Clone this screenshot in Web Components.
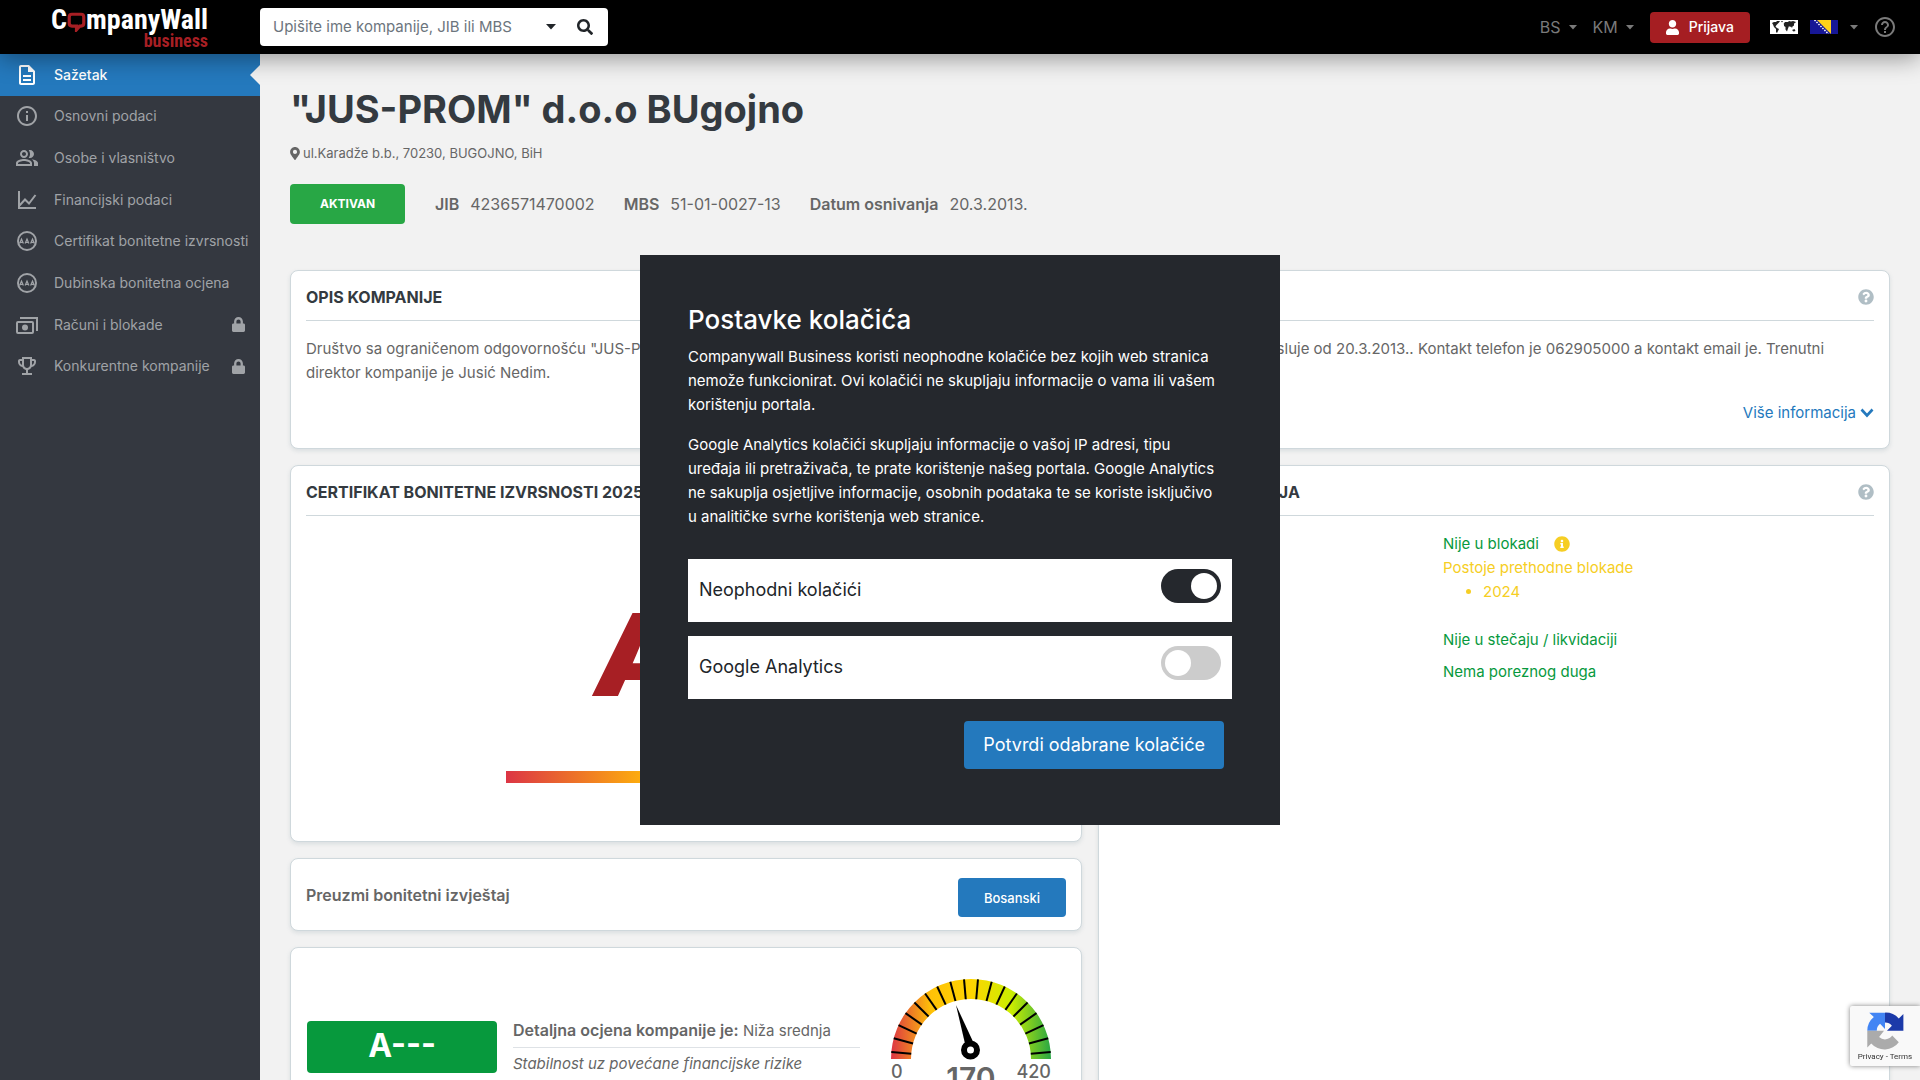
<!DOCTYPE html>
<html lang="bs">
<head>
<meta charset="utf-8">
<meta name="viewport" content="width=device-width, initial-scale=1">
<title>"JUS-PROM" d.o.o BUgojno - CompanyWall Business</title>
<style>
    :root {
        --blue: #2479bd;
        --red: #a71f24;
        --green: #07993d;
        --yellow: #f6ce24;
        --dark: #343840;
        --modal: #25282d;
        --text: #666;
        --line: #cfd8dc;
    }

    body {
        margin: 0;
        height: 100vh;
        overflow: hidden;
        background: #f2f2f2;
        color: var(--text);
        font: 16px/24px Inter, "Liberation Sans", sans-serif;
    }
</style>
</head>
<body>
<cw-app></cw-app>

<script>
// shared base: every component renders its template into an open shadow root
class CwElement extends HTMLElement {
    constructor() {
        super();
        this.attachShadow({ mode: 'open' });
    }

    connectedCallback() {
        this.shadowRoot.innerHTML = `
            <style>
                *, *::before, *::after { box-sizing: border-box; }
                button, input { font: inherit; }
                button { cursor: pointer; }
                a { color: inherit; text-decoration: none; }
                h1, h2, p, ul, dl, dd { margin: 0; padding: 0; }
            </style>
            ${this.template()}
        `;
    }
}

// icon set: [viewBox, markup]
const ICONS = {
    doc: ['0 0 24 24', '<path d="M8 16h8v2H8zm0-4h8v2H8zm6-10H6c-1.1 0-2 .9-2 2v16c0 1.1.89 2 1.99 2H18c1.1 0 2-.9 2-2V8l-6-6zm4 18H6V4h7v5h5v11z"/>'],
    info: ['0 0 24 24', '<path d="M11 7h2v2h-2zm0 4h2v6h-2zm1-9C6.48 2 2 6.48 2 12s4.48 10 10 10 10-4.48 10-10S17.52 2 12 2zm0 18c-4.41 0-8-3.59-8-8s3.59-8 8-8 8 3.59 8 8-3.59 8-8 8z"/>'],
    people: ['0 0 24 24', '<path d="M16.67 13.13C18.04 14.06 19 15.32 19 17v3h4v-3c0-2.18-3.57-3.47-6.33-3.87zM15 12c2.21 0 4-1.79 4-4s-1.79-4-4-4c-.47 0-.91.1-1.33.24C14.5 5.27 15 6.58 15 8s-.5 2.73-1.33 3.76c.42.14.86.24 1.33.24zM9 12c2.21 0 4-1.79 4-4s-1.79-4-4-4-4 1.79-4 4 1.79 4 4 4zm0-6c1.1 0 2 .9 2 2s-.9 2-2 2-2-.9-2-2 .9-2 2-2zm0 7c-2.67 0-8 1.34-8 4v3h16v-3c0-2.66-5.33-4-8-4zm6 5H3v-.99C3.2 16.29 6.3 15 9 15s5.8 1.29 6 2v1z"/>'],
    chart: ['0 0 24 24', '<path d="M4 3v17h17M4.500 17.500l5.500-6 4 4 6.500-8.500" fill="none" stroke="currentColor" stroke-width="2"/>'],
    aaa: ['0 0 24 24', '<circle cx="12" cy="12" r="9" fill="none" stroke="currentColor" stroke-width="2"/><path d="M4.600 14.500l1.900-4.500 1.900 4.500M5.300 13.300h2.400M10.100 14.500l1.900-4.500 1.900 4.500M10.800 13.300h2.400M15.600 14.500l1.900-4.500 1.900 4.500M16.300 13.300h2.400" fill="none" stroke="currentColor" stroke-width="1.200"/>'],
    money: ['0 0 24 24', '<path d="M5 5h17v13" fill="none" stroke="currentColor" stroke-width="2"/><rect x="2" y="9" width="16" height="11" rx="1" fill="none" stroke="currentColor" stroke-width="2"/><circle cx="10" cy="14.500" r="3"/>'],
    trophy: ['0 0 24 24', '<path d="M19 5h-2V3H7v2H5c-1.1 0-2 .9-2 2v1c0 2.55 1.92 4.63 4.39 4.94.63 1.5 1.98 2.63 3.61 2.96V19H7v2h10v-2h-4v-3.100c1.630-.330 2.980-1.460 3.610-2.960C19.080 12.630 21 10.550 21 8V7c0-1.100-.900-2-2-2zM5 8V7h2v3.820C5.840 10.400 5 9.300 5 8zm7 6c-1.650 0-3-1.350-3-3V5h6v6c0 1.650-1.350 3-3 3zm7-6c0 1.300-.840 2.400-2 2.820V7h2v1z"/>'],
    lock: ['0 0 448 512', '<path d="M400 224h-24v-72C376 68.200 307.800 0 224 0S72 68.200 72 152v72H48c-26.500 0-48 21.500-48 48v192c0 26.500 21.500 48 48 48h352c26.500 0 48-21.500 48-48V272c0-26.500-21.500-48-48-48zm-104 0H152v-72c0-39.700 32.300-72 72-72s72 32.300 72 72v72z"/>'],
    pin: ['0 0 384 512', '<path d="M172.268 501.670C26.970 291.031 0 269.413 0 192 0 85.961 85.961 0 192 0s192 85.961 192 192c0 77.413-26.970 99.031-172.268 309.670-9.535 13.774-29.930 13.773-39.464 0zM192 272c44.183 0 80-35.817 80-80s-35.817-80-80-80-80 35.817-80 80 35.817 80 80 80z"/>'],
    search: ['0 0 512 512', '<path d="M505 442.700L405.300 343c-4.500-4.500-10.600-7-17-7H372c27.600-35.300 44-79.700 44-128C416 93.100 322.900 0 208 0S0 93.100 0 208s93.100 208 208 208c48.300 0 92.700-16.400 128-44v16.300c0 6.400 2.500 12.500 7 17l99.700 99.700c9.400 9.400 24.600 9.400 33.900 0l28.300-28.300c9.400-9.400 9.400-24.600.1-34zM208 336c-70.700 0-128-57.200-128-128 0-70.700 57.200-128 128-128 70.700 0 128 57.200 128 128 0 70.700-57.200 128-128 128z"/>'],
    caret: ['0 0 10 6', '<path d="M0 0h10L5 5.500z"/>'],
    user: ['0 0 448 512', '<path d="M224 256c70.700 0 128-57.300 128-128S294.700 0 224 0 96 57.300 96 128s57.300 128 128 128zm89.600 32h-16.700c-22.200 10.200-46.900 16-72.900 16s-50.600-5.800-72.900-16h-16.700C60.200 288 0 348.200 0 422.400V464c0 26.500 21.500 48 48 48h352c26.500 0 48-21.500 48-48v-41.600c0-74.200-60.200-134.400-134.400-134.400z"/>'],
    help: ['0 0 24 24', '<path d="M11 18h2v-2h-2v2zm1-16C6.480 2 2 6.480 2 12s4.480 10 10 10 10-4.480 10-10S17.520 2 12 2zm0 18c-4.410 0-8-3.590-8-8s3.590-8 8-8 8 3.590 8 8-3.590 8-8 8zm0-14c-2.210 0-4 1.790-4 4h2c0-1.100.900-2 2-2s2 .900 2 2c0 2-3 1.750-3 5h2c0-2.250 3-2.500 3-5 0-2.210-1.790-4-4-4z"/>'],
    question: ['0 0 512 512', '<path d="M504 256c0 137-111 248-248 248S8 393 8 256C8 119 119 8 256 8s248 111 248 248zM262.700 90c-54.500 0-89.300 23-116.500 63.800-3.500 5.300-2.400 12.400 2.700 16.300l34.700 26.300c5.200 3.900 12.600 3 16.700-2.100 17.900-22.700 30.100-35.800 57.300-35.800 20.400 0 45.700 13.100 45.700 33 0 15-12.400 22.700-32.500 34C247.100 238.500 216 254.900 216 296v4c0 6.600 5.400 12 12 12h56c6.600 0 12-5.400 12-12v-1.300c0-28.500 83.200-29.600 83.200-106.700 0-58-60.200-102-116.500-102zM256 338c-25.400 0-46 20.600-46 46s20.600 46 46 46 46-20.600 46-46-20.600-46-46-46z"/>'],
    infoSolid: ['0 0 512 512', '<path d="M256 8C119 8 8 119 8 256s111 248 248 248 248-111 248-248S393 8 256 8zm0 110c23.200 0 42 18.800 42 42s-18.800 42-42 42-42-18.800-42-42 18.800-42 42-42zm56 254c0 6.600-5.400 12-12 12h-88c-6.600 0-12-5.400-12-12v-24c0-6.600 5.400-12 12-12h12v-64h-12c-6.600 0-12-5.400-12-12v-24c0-6.600 5.400-12 12-12h64c6.600 0 12 5.400 12 12v100h12c6.600 0 12 5.400 12 12v24z"/>'],
    chevron: ['0 0 14 10', '<path d="M1.500 1.500L7 7.500l5.500-6" fill="none" stroke="currentColor" stroke-width="2.600"/>'],
    bubble: ['0 0 20 22', '<path d="M5 2.500h10q3 0 3 3v7q0 3-3 3h-1.500L10 19.500v-4H5q-3 0-3-3v-7q0-3 3-3z" fill="none" stroke="currentColor" stroke-width="3.500"/>'],
    world: ['0 0 28 14', '<rect width="28" height="14" fill="#fff"/><path d="M2 3l2-1 2 0 1-1 3 0-1 1.500-1 1-1.500 1.500-1 1.500 1.500 1.500 2 1-1 2-1 2-1-1 0-3-2-2-1-2.500zM11 1h2l-1 1.500zM13.500 4l1.500-2 3 0 1-1 2 .500 2-.500 3 1-1 1-1 .500 0 2-1.500 1-.500 1.500-1-1.500-1 .500-1-1-1 2.500-1 3-1.500-2 0-2.500-1.500-1 0-1.500zM22 10l2.500-1 1 2-2 .500z" fill="#222"/>'],
    bosnia: ['0 0 28 14', '<rect width="28" height="14" fill="#171796"/><path d="M7 0h14v14z" fill="#ffd21a"/><path d="M4.500 0l14 14" stroke="#fff" stroke-width="1.500" stroke-dasharray="1.500 1.300"/>']
};

class CwIcon extends CwElement {
    template() {
        const [box, body] = ICONS[this.getAttribute('name')];
        const w = this.getAttribute('w') || 16;
        const h = this.getAttribute('h') || w;
        return `
            <style>
                :host { display: inline-flex; flex: none; }
                svg { display: block; fill: currentColor; }
            </style>
            <svg width="${w}" height="${h}" viewBox="${box}" aria-hidden="true">${body}</svg>
        `;
    }
}

class CwLogo extends CwElement {
    template() {
        return `
            <style>
                :host {
                    display: flex;
                    flex-direction: column;
                    align-items: flex-end;
                    font-family: "Roboto Condensed", "Liberation Sans Narrow", "DejaVu Sans Condensed", sans-serif;
                    font-weight: 700;
                    color: #fff;
                }
                .name { display: flex; font-size: 28px; line-height: 28px; }
                cw-icon { color: var(--red); padding-top: 6px; }
                .sub { font-size: 18px; line-height: 14px; color: var(--red); }
            </style>
            <span class="name">C<cw-icon name="bubble" w="19" h="20"></cw-icon>mpanyWall</span>
            <span class="sub">business</span>
        `;
    }
}

class CwHeader extends CwElement {
    template() {
        return `
            <style>
                :host {
                    display: flex;
                    align-items: center;
                    height: 54px;
                    background: #000;
                    color: #7a7a7a;
                    position: relative;
                    z-index: 5;
                    box-shadow: 0 4px 24px rgba(0,0,0,0.4);
                }
                .brand { width: 260px; display: flex; justify-content: flex-end; padding-right: 52px; }
                .search {
                    display: flex;
                    align-items: center;
                    width: 348px;
                    height: 38px;
                    background: #fff;
                    border-radius: 4px;
                    padding: 0 15px 0 13px;
                    color: #212529;
                }
                .search input {
                    flex: 1;
                    min-width: 0;
                    border: 0;
                    padding: 0;
                    outline: 0;
                    background: none;
                    font-size: 15px;
                }
                .search input::placeholder { color: #6c757d; opacity: 1; }
                .search button {
                    display: flex;
                    border: 0;
                    background: none;
                    padding: 0;
                    margin-left: 21px;
                    color: inherit;
                }
                .tools { margin-left: auto; display: flex; align-items: center; padding-right: 23px; }
                .tools button {
                    display: flex;
                    align-items: center;
                    gap: 8px;
                    border: 0;
                    padding: 0;
                    background: none;
                    color: inherit;
                    margin-right: 16px;
                }
                .tools .login {
                    height: 31px;
                    padding: 0 16px;
                    gap: 10px;
                    border-radius: 4px;
                    background: #a51e22;
                    color: #fff;
                    font-size: 14px;
                    font-weight: 500;
                    margin-right: 20px;
                }
                .tools .flags { gap: 12px; margin-right: 15px; }
                .tools a { display: flex; }
            </style>
            <a class="brand" href="#" aria-label="CompanyWall business"><cw-logo></cw-logo></a>
            <form class="search" role="search">
                <input type="text" placeholder="Upišite ime kompanije, JIB ili MBS" aria-label="Pretraga">
                <button type="button" aria-label="Opcije"><cw-icon name="caret" w="10" h="6"></cw-icon></button>
                <button type="button" aria-label="Traži"><cw-icon name="search"></cw-icon></button>
            </form>
            <div class="tools">
                <button type="button">BS <cw-icon name="caret" w="8" h="5"></cw-icon></button>
                <button type="button">KM <cw-icon name="caret" w="8" h="5"></cw-icon></button>
                <button type="button" class="login"><cw-icon name="user" w="13" h="15"></cw-icon>Prijava</button>
                <button type="button" class="flags" aria-label="Država">
                    <cw-icon name="world" w="28" h="14"></cw-icon>
                    <cw-icon name="bosnia" w="28" h="14"></cw-icon>
                    <cw-icon name="caret" w="8" h="5"></cw-icon>
                </button>
                <a href="#" aria-label="Pomoć"><cw-icon name="help" w="24"></cw-icon></a>
            </div>
        `;
    }
}

class CwNavItem extends CwElement {
    template() {
        const lock = this.hasAttribute('locked') ? '<cw-icon class="lock" name="lock" w="13" h="15"></cw-icon>' : '';
        return `
            <style>
                :host { display: flex; flex: 1; color: #a0a3a7; }
                :host([active]) { background: var(--blue); color: #fff; font-weight: 500; position: relative; }
                :host([active])::after {
                    content: "";
                    position: absolute;
                    right: 0;
                    top: 50%;
                    margin-top: -10px;
                    border: 10px solid transparent;
                    border-left: 0;
                    border-right-color: #f2f2f2;
                }
                a { display: flex; align-items: center; gap: 15px; width: 100%; padding: 0 15px; white-space: nowrap; }
                .lock { margin-left: auto; }
            </style>
            <a href="#"><cw-icon name="${this.getAttribute('icon')}" w="24"></cw-icon><slot></slot>${lock}</a>
        `;
    }
}

class CwSidebar extends CwElement {
    template() {
        return `
            <style>
                :host { display: block; background: var(--dark); font-size: 14px; }
                nav { display: flex; flex-direction: column; height: 333px; }
            </style>
            <nav>
                <cw-nav-item icon="doc" active>Sažetak</cw-nav-item>
                <cw-nav-item icon="info">Osnovni podaci</cw-nav-item>
                <cw-nav-item icon="people">Osobe i vlasništvo</cw-nav-item>
                <cw-nav-item icon="chart">Financijski podaci</cw-nav-item>
                <cw-nav-item icon="aaa">Certifikat bonitetne izvrsnosti</cw-nav-item>
                <cw-nav-item icon="aaa">Dubinska bonitetna ocjena</cw-nav-item>
                <cw-nav-item icon="money" locked>Računi i blokade</cw-nav-item>
                <cw-nav-item icon="trophy" locked>Konkurentne kompanije</cw-nav-item>
            </nav>
        `;
    }
}

class CwCompanyHead extends CwElement {
    template() {
        return `
            <style>
                :host { display: block; }
                h1 { font-size: 38px; line-height: 48px; font-weight: 700; color: #343a40; }
                .address { display: flex; align-items: center; gap: 3px; margin-top: 10px; font-size: 13px; line-height: 20px; }
                .facts { display: flex; align-items: center; gap: 30px; margin-top: 21px; height: 40px; }
                .status {
                    width: 115px;
                    line-height: 40px;
                    border-radius: 4px;
                    background: #28a745;
                    color: #fff;
                    font-size: 12px;
                    font-weight: 700;
                    text-align: center;
                }
                dl { display: flex; gap: 29px; }
                dl div { display: flex; gap: 11px; }
                dt { font-weight: 600; }
            </style>
            <h1>"JUS-PROM" d.o.o BUgojno</h1>
            <p class="address"><cw-icon name="pin" w="10" h="13"></cw-icon>ul.Karadže b.b., 70230, BUGOJNO, BiH</p>
            <div class="facts">
                <span class="status">AKTIVAN</span>
                <dl>
                    <div><dt>JIB</dt><dd>4236571470002</dd></div>
                    <div><dt>MBS</dt><dd>51-01-0027-13</dd></div>
                    <div><dt>Datum osnivanja</dt><dd>20.3.2013.</dd></div>
                </dl>
            </div>
        `;
    }
}

class CwCard extends CwElement {
    template() {
        const title = this.getAttribute('heading');
        const help = this.hasAttribute('help')
            ? '<button type="button" aria-label="Pomoć"><cw-icon name="question"></cw-icon></button>' : '';
        return `
            <style>
                :host {
                    display: block;
                    background: #fff;
                    border: 1px solid var(--line);
                    border-radius: 8px;
                    padding: 0 15px;
                    box-shadow: 0 2px 4px rgba(120,144,156,0.2);
                }
                header {
                    display: flex;
                    align-items: center;
                    justify-content: space-between;
                    height: 50px;
                    padding-top: 3px;
                    border-bottom: 1px solid var(--line);
                }
                h2 { font-size: 16px; line-height: 24px; font-weight: 700; color: #343a40; }
                button { border: 0; padding: 0; background: none; color: #b0bec5; display: flex; }
            </style>
            ${title ? `<header><h2>${title}</h2>${help}</header>` : ''}
            <slot></slot>
        `;
    }
}

class CwDescription extends CwElement {
    template() {
        return `
            <style>
                :host { display: block; padding: 16px 0 23px; font-size: 15px; }
                a { display: flex; justify-content: flex-end; align-items: center; gap: 4px; margin-top: 16px; color: var(--blue); }
            </style>
            <p>Društvo sa ograničenom odgovornošću "JUS-PROM" d.o.o BUgojno registrovano je kao privredno društvo u gradu BUGOJNO, aktivno posluje od 20.3.2013.. Kontakt telefon je 062905000 a kontakt email je. Trenutni direktor kompanije je Jusić Nedim.</p>
            <a href="#">Više informacija <cw-icon name="chevron" w="14" h="10"></cw-icon></a>
        `;
    }
}

class CwCertificate extends CwElement {
    template() {
        return `
            <style>
                :host {
                    display: flex;
                    flex-direction: column;
                    align-items: center;
                    padding: 79px 0 58px;
                }
                .grade { font-size: 114px; line-height: 120px; font-style: italic; font-weight: 900; color: var(--red); }
                .scale {
                    width: 360px;
                    height: 12px;
                    margin-top: 56px;
                    background: linear-gradient(90deg, #dc3545, #ffb40a 40%, #ffd500 50%, #28a745);
                }
            </style>
            <span class="grade">AA</span>
            <div class="scale"></div>
        `;
    }
}

class CwBlockade extends CwElement {
    template() {
        return `
            <style>
                :host { display: block; padding: 16px 0 0 329px; color: var(--green); font-size: 15px; }
                .row { display: flex; align-items: center; gap: 15px; }
                .warn, cw-icon { color: var(--yellow); }
                ul { padding-left: 40px; }
                .gap { margin: 24px 0 8px; }
            </style>
            <p class="row">Nije u blokadi <cw-icon name="infoSolid"></cw-icon></p>
            <p class="warn">Postoje prethodne blokade</p>
            <ul class="warn"><li>2024</li></ul>
            <p class="gap">Nije u stečaju / likvidaciji</p>
            <p>Nema poreznog duga</p>
        `;
    }
}

class CwDownload extends CwElement {
    template() {
        return `
            <style>
                :host { display: flex; justify-content: space-between; align-items: center; height: 71px; }
                strong { font-weight: 600; }
                button {
                    width: 108px;
                    height: 39px;
                    margin-top: 6px;
                    border: 0;
                    border-radius: 4px;
                    background: var(--blue);
                    color: #fff;
                    font-size: 13px;
                    font-weight: 500;
                }
            </style>
            <strong>Preuzmi bonitetni izvještaj</strong>
            <button type="button">Bosanski</button>
        `;
    }
}

class CwGauge extends CwElement {
    template() {
        let ticks = '';
        for (let deg = 5; deg < 180; deg += 10) {
            const a = deg * Math.PI / 180;
            const x = Math.cos(a);
            const y = Math.sin(a);
            ticks += `<path d="M${90 - 60 * x} ${80 - 60 * y}L${90 - 80 * x} ${80 - 80 * y}"/>`;
        }
        return `
            <style>
                :host { display: flex; flex-direction: column; width: 160px; }
                svg { display: block; overflow: visible; }
                .labels { display: grid; grid-template-columns: 1fr auto 1fr; font-size: 18px; line-height: 26px; font-weight: 500; }
                .value { font-size: 30px; font-weight: 600; line-height: 34px; padding-top: 2px; }
                .max { text-align: right; }
            </style>
            <svg width="160" height="80" viewBox="10 0 160 80" role="img" aria-label="170 od 420">
                <defs>
                    <linearGradient id="g">
                        <stop offset="0" stop-color="#dc3545"/>
                        <stop offset="0.250" stop-color="#ffc107"/>
                        <stop offset="0.500" stop-color="#ffd500"/>
                        <stop offset="0.750" stop-color="#ccee00"/>
                        <stop offset="1" stop-color="#28a745"/>
                    </linearGradient>
                </defs>
                <path d="M10 80a80 80 0 0 1 160 0h-20a60 60 0 0 0-120 0z" fill="url(#g)"/>
                <g stroke="#000" stroke-width="2">${ticks}</g>
                <path d="M75 26l19.500 42-9 3z"/>
                <circle cx="89.500" cy="71" r="6.500" fill="#fff" stroke="#000" stroke-width="6"/>
            </svg>
            <div class="labels"><span>0</span><span class="value">170</span><span class="max">420</span></div>
        `;
    }
}

class CwRating extends CwElement {
    template() {
        return `
            <style>
                :host { display: flex; padding: 31px 15px 24px 1px; }
                .badge {
                    width: 190px;
                    height: 52px;
                    margin-top: 42px;
                    border-radius: 4px;
                    background: var(--green);
                    color: #fff;
                    font-size: 32px;
                    line-height: 50px;
                    font-weight: 700;
                    text-align: center;
                }
                .detail { flex: 1; margin: 39px 31px 0 16px; font-size: 15px; }
                .detail p:first-child { padding-bottom: 4px; border-bottom: 1px solid #dee2e6; }
                .detail p + p { padding-top: 4px; font-style: italic; }
                b { font-size: 16px; font-weight: 600; }
            </style>
            <span class="badge">A---</span>
            <div class="detail">
                <p><b>Detaljna ocjena kompanije je:</b> Niža srednja</p>
                <p>Stabilnost uz povećane financijske rizike</p>
            </div>
            <cw-gauge></cw-gauge>
        `;
    }
}

class CwToggle extends CwElement {
    template() {
        return `
            <style>
                :host { display: block; background: #fff; color: #212529; font-size: 18px; }
                label { display: flex; justify-content: space-between; height: 63px; padding: 10px 11px; line-height: 42px; }
                input {
                    appearance: none;
                    width: 60px;
                    height: 34px;
                    margin: 0;
                    padding: 4px;
                    border-radius: 17px;
                    background: #ccc;
                    display: flex;
                    cursor: pointer;
                }
                input::before { content: ""; width: 26px; height: 26px; border-radius: 50%; background: #fff; }
                input:checked { background: var(--modal); justify-content: flex-end; }
            </style>
            <label><slot></slot><input type="checkbox" ${this.hasAttribute('checked') ? 'checked' : ''}></label>
        `;
    }
}

class CwCookieModal extends CwElement {
    template() {
        return `
            <style>
                :host {
                    position: fixed;
                    inset: 0;
                    display: flex;
                    align-items: center;
                    justify-content: center;
                    z-index: 10;
                }
                section { width: 640px; padding: 48px 48px 56px; background: var(--modal); color: #fff; font-size: 15px; }
                h2 { font-size: 26px; line-height: 34px; font-weight: 500; margin-bottom: 8px; }
                p { margin-bottom: 16px; padding-right: 8px; }
                .options { display: grid; gap: 14px; margin: 30px 0 22px; }
                .actions { display: flex; justify-content: flex-end; padding-right: 8px; }
                button {
                    height: 48px;
                    padding: 0 19px;
                    border: 0;
                    border-radius: 4px;
                    background: var(--blue);
                    color: #fff;
                    font-size: 18px;
                }
            </style>
            <section role="dialog" aria-label="Postavke kolačića">
                <h2>Postavke kolačića</h2>
                <p>Companywall Business koristi neophodne kolačiće bez kojih web stranica nemože funkcionirat. Ovi kolačići ne skupljaju informacije o vama ili vašem korištenju portala.</p>
                <p>Google Analytics kolačići skupljaju informacije o vašoj IP adresi, tipu uređaja ili pretraživača, te prate korištenje našeg portala. Google Analytics ne sakuplja osjetljive informacije, osobnih podataka te se koriste isključivo u analitičke svrhe korištenja web stranice.</p>
                <div class="options">
                    <cw-toggle checked>Neophodni kolačići</cw-toggle>
                    <cw-toggle>Google Analytics</cw-toggle>
                </div>
                <div class="actions"><button type="button">Potvrdi odabrane kolačiće</button></div>
            </section>
        `;
    }
}

class CwCaptcha extends CwElement {
    template() {
        return `
            <style>
                :host {
                    position: fixed;
                    right: 0;
                    bottom: 14px;
                    width: 70px;
                    height: 60px;
                    z-index: 6;
                    display: flex;
                    flex-direction: column;
                    align-items: center;
                    padding-top: 4px;
                    box-sizing: border-box;
                    background: #f9f9f9;
                    border-radius: 2px 0 0 2px;
                    box-shadow: 0 0 5px gray;
                    font: 8px/10px Roboto, sans-serif;
                    color: #333;
                }
                svg { display: block; }
                span { white-space: nowrap; }
            </style>
            <svg width="42" height="42" viewBox="0 0 64 64" aria-hidden="true">
                <path d="M60 31.500V6l-7 7A27 27 0 0 0 32 4v15a13 13 0 0 1 10.500 5L35 31.500z" fill="#1c3aa9"/>
                <path d="M32 4H8l7 6.500A27 27 0 0 0 5 31.500h14.500a13 13 0 0 1 5-10.500l7.500 8z" fill="#4285f4"/>
                <path d="M5 31.500V57l6-6a27 27 0 0 0 42-2L43 39a13 13 0 0 1-20 2l7.500-9.500z" fill="#ababab"/>
            </svg>
            <span><a href="#">Privacy</a> - <a href="#">Terms</a></span>
        `;
    }
}

class CwApp extends CwElement {
    template() {
        return `
            <style>
                :host { display: grid; grid-template-rows: auto 1fr; height: 100vh; }
                .body { display: grid; grid-template-columns: 260px 1fr; min-height: 0; }
                main { padding: 31px 30px 0; overflow: hidden; }
                .wide { display: block; margin: 46px 0 16px; }
                .columns { display: grid; grid-template-columns: 1fr 1fr; gap: 16px; }
                .stack { display: grid; gap: 16px; }
            </style>
            <cw-header></cw-header>
            <div class="body">
                <cw-sidebar></cw-sidebar>
                <main>
                    <cw-company-head></cw-company-head>
                    <cw-card class="wide" heading="OPIS KOMPANIJE" help><cw-description></cw-description></cw-card>
                    <div class="columns">
                        <div class="stack">
                            <cw-card heading="CERTIFIKAT BONITETNE IZVRSNOSTI 2025"><cw-certificate></cw-certificate></cw-card>
                            <cw-card><cw-download></cw-download></cw-card>
                            <cw-card><cw-rating></cw-rating></cw-card>
                        </div>
                        <cw-card heading="BLOKADE, LIKVIDACIJA" help><cw-blockade></cw-blockade></cw-card>
                    </div>
                </main>
            </div>
            <cw-captcha></cw-captcha>
            <cw-cookie-modal></cw-cookie-modal>
        `;
    }
}

customElements.define('cw-icon', CwIcon);
customElements.define('cw-logo', CwLogo);
customElements.define('cw-header', CwHeader);
customElements.define('cw-nav-item', CwNavItem);
customElements.define('cw-sidebar', CwSidebar);
customElements.define('cw-company-head', CwCompanyHead);
customElements.define('cw-card', CwCard);
customElements.define('cw-description', CwDescription);
customElements.define('cw-certificate', CwCertificate);
customElements.define('cw-blockade', CwBlockade);
customElements.define('cw-download', CwDownload);
customElements.define('cw-gauge', CwGauge);
customElements.define('cw-rating', CwRating);
customElements.define('cw-toggle', CwToggle);
customElements.define('cw-cookie-modal', CwCookieModal);
customElements.define('cw-captcha', CwCaptcha);
customElements.define('cw-app', CwApp);
</script>
</body>
</html>
